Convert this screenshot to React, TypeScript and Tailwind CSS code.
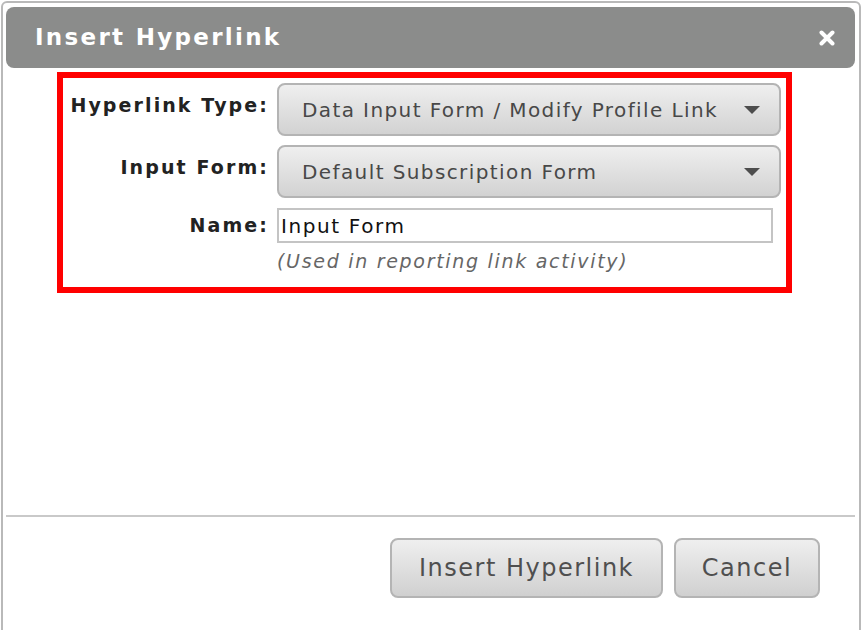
const font = { fontFamily: '"DejaVu Sans", Verdana, sans-serif' }

function Caret() {
  return (
    <svg className="w-[16px] h-[8px] flex-shrink-0" viewBox="0 0 16 8" aria-hidden="true">
      <path d="M0 0h16L8 8z" fill="#4d4d4d" />
    </svg>
  )
}

function SelectBox({ value }: { value: string }) {
  return (
    <div className="h-[53px] flex items-center justify-between pl-[23px] pr-[19px] rounded-[8px] border-2 border-[#b4b4b4] bg-gradient-to-b from-[#efefef] to-[#d2d2d2] text-[20px] tracking-[1.4px] text-[#484848]">
      <span>{value}</span>
      <Caret />
    </div>
  )
}

function Button({ children, width }: { children: React.ReactNode; width: string }) {
  return (
    <button
      type="button"
      className={`${width} h-[60px] rounded-[8px] border-2 border-[#b4b4b4] bg-gradient-to-b from-[#efefef] to-[#d0d0d0] text-[24px] tracking-[1.5px] text-[#4f4f4f]`}
    >
      {children}
    </button>
  )
}

export default function App() {
  return (
    <div className="w-[863px] h-[630px] overflow-hidden bg-white pt-px pl-px" style={font}>
      <div className="w-[860px] h-[660px] border-2 border-[#b9b9b9] rounded-[6px] pt-[4px] pl-[3px] pr-[4px] flex flex-col">
        {/* Title bar */}
        <div className="h-[61px] rounded-[8px] bg-[#8b8c8b] flex items-center justify-between pl-[29px] pr-[20px]">
          <span className="text-[23px] font-bold tracking-[2.3px] text-white">Insert Hyperlink</span>
          <svg className="w-[16px] h-[16px]" viewBox="0 0 16 16" aria-hidden="true">
            <path d="M2.5 2.5l11 11M13.5 2.5l-11 11" stroke="white" strokeWidth="4" strokeLinecap="round" />
          </svg>
        </div>

        {/* Highlighted form */}
        <div className="ml-[51px] mt-[4px] w-[735px] h-[221px] border-[6px] border-[#ff0000] pt-[5px] pr-[5px]">
          <div className="grid grid-cols-[204px_1fr] gap-x-[10px] items-center">
            <label className="mb-[8px] -mr-[2px] text-right text-[19px] font-bold tracking-[2.1px] text-[#222]">
              Hyperlink Type:
            </label>
            <SelectBox value="Data Input Form / Modify Profile Link" />

            <label className="mt-[9px] mb-[8px] -mr-[2px] text-right text-[19px] font-bold tracking-[2.1px] text-[#222]">
              Input Form:
            </label>
            <div className="mt-[9px]">
              <SelectBox value="Default Subscription Form" />
            </div>

            <label className="mt-[10px] -mr-[2px] text-right text-[19px] font-bold tracking-[2.1px] text-[#222]">
              Name:
            </label>
            <div className="mt-[10px] pr-[8px]">
              <input
                type="text"
                defaultValue="Input Form"
                className="w-full h-[35px] border-2 border-[#c4c4c4] px-[2px] text-[20px] tracking-[1.6px] text-[#111] outline-none"
                style={font}
              />
            </div>

            <div />
            <div className="mt-[4px] text-[19px] italic tracking-[1.7px] text-[#666]">
              (Used in reporting link activity)
            </div>
          </div>
        </div>

        <div className="flex-1" />

        {/* Footer */}
        <div className="h-[2px] bg-[#c9c9c9]" />
        <div className="flex justify-end gap-[11px] pt-[21px] pr-[35px] pb-[61px]">
          <Button width="w-[273px]">Insert Hyperlink</Button>
          <Button width="w-[146px]">Cancel</Button>
        </div>
      </div>
    </div>
  )
}
